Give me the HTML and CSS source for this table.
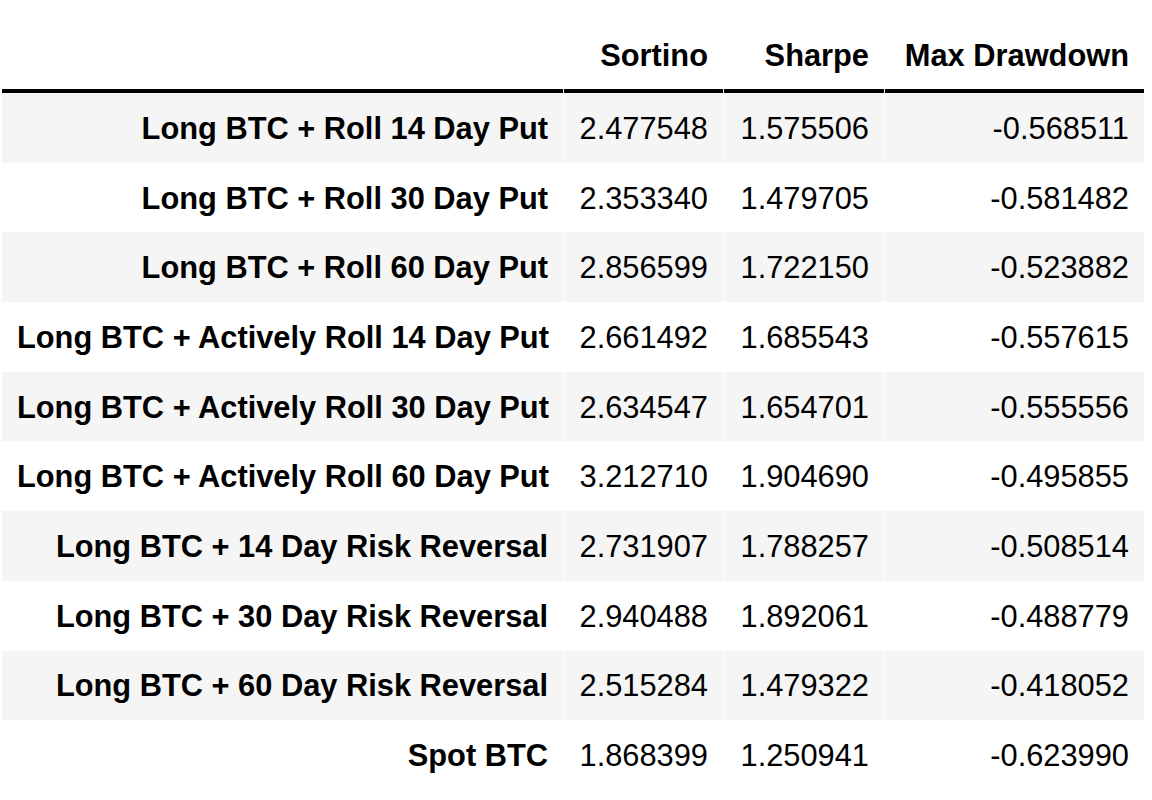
FILE: index.html
```html
<!DOCTYPE html>
<html>
<head>
<meta charset="utf-8">
<link rel="stylesheet" href="styles.css">
</head>
<body>
<table class="df">
  <colgroup>
    <col class="c-idx">
    <col class="c-num">
    <col class="c-num2">
    <col class="c-dd">
  </colgroup>
  <thead>
    <tr><th></th><th>Sortino</th><th>Sharpe</th><th>Max Drawdown</th></tr>
  </thead>
  <tbody>
    <tr><th>Long BTC + Roll 14 Day Put</th><td>2.477548</td><td>1.575506</td><td>-0.568511</td></tr>
    <tr><th>Long BTC + Roll 30 Day Put</th><td>2.353340</td><td>1.479705</td><td>-0.581482</td></tr>
    <tr><th>Long BTC + Roll 60 Day Put</th><td>2.856599</td><td>1.722150</td><td>-0.523882</td></tr>
    <tr><th>Long BTC + Actively Roll 14 Day Put</th><td>2.661492</td><td>1.685543</td><td>-0.557615</td></tr>
    <tr><th>Long BTC + Actively Roll 30 Day Put</th><td>2.634547</td><td>1.654701</td><td>-0.555556</td></tr>
    <tr><th>Long BTC + Actively Roll 60 Day Put</th><td>3.212710</td><td>1.904690</td><td>-0.495855</td></tr>
    <tr><th>Long BTC + 14 Day Risk Reversal</th><td>2.731907</td><td>1.788257</td><td>-0.508514</td></tr>
    <tr><th>Long BTC + 30 Day Risk Reversal</th><td>2.940488</td><td>1.892061</td><td>-0.488779</td></tr>
    <tr><th>Long BTC + 60 Day Risk Reversal</th><td>2.515284</td><td>1.479322</td><td>-0.418052</td></tr>
    <tr><th>Spot BTC</th><td>1.868399</td><td>1.250941</td><td>-0.623990</td></tr>
  </tbody>
</table>
</body>
</html>
```

FILE: styles.css
```css
html, body {
  margin: 0;
  padding: 0;
  background: #ffffff;
}

body {
  font-family: "Liberation Sans", Arial, Helvetica, sans-serif;
  color: #000000;
}

.df {
  border-collapse: separate;
  border-spacing: 1px 0;
  margin: 21px 0 0 1px;
  table-layout: fixed;
  width: 1143px;
  font-size: 30.8px;
  line-height: 1;
}

.c-idx { width: 561px; }
.c-num { width: 159px; }
.c-num2 { width: 160px; }
.c-dd { width: 259px; }

.df th,
.df td {
  text-align: right;
  vertical-align: middle;
  padding: 0 15px;
  white-space: nowrap;
  box-sizing: border-box;
}

.df thead th {
  height: 72px;
  font-weight: bold;
  border-bottom: 4px solid #000000;
  padding-top: 2px;
}

.df tbody th,
.df tbody td {
  height: 69.7px;
  padding-top: 3px;
}

.df tbody th {
  font-weight: bold;
}

.df td {
  font-weight: normal;
}

.df tbody tr:nth-child(odd) {
  background: #f5f5f5;
}
```
